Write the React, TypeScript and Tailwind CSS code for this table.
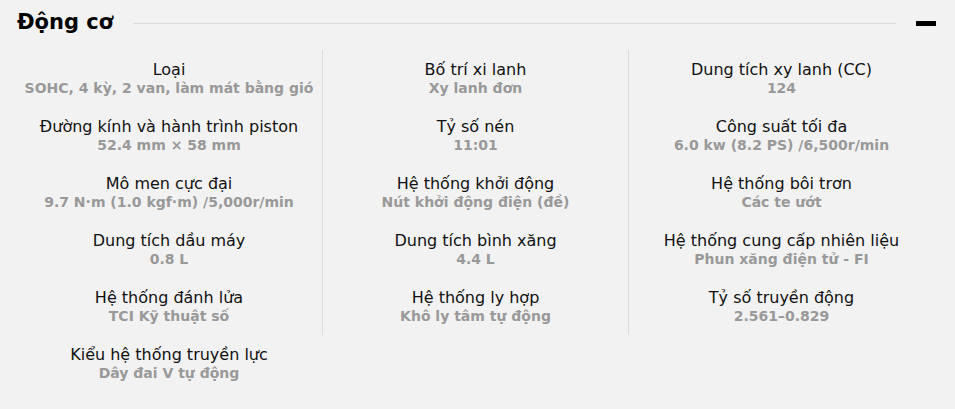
const columns: { label: string; value: string }[][] = [
  [
    { label: "Loại", value: "SOHC, 4 kỳ, 2 van, làm mát bằng gió" },
    { label: "Đường kính và hành trình piston", value: "52.4 mm × 58 mm" },
    { label: "Mô men cực đại", value: "9.7 N·m (1.0 kgf·m) /5,000r/min" },
    { label: "Dung tích dầu máy", value: "0.8 L" },
    { label: "Hệ thống đánh lửa", value: "TCI Kỹ thuật số" },
    { label: "Kiểu hệ thống truyền lực", value: "Dây đai V tự động" },
  ],
  [
    { label: "Bố trí xi lanh", value: "Xy lanh đơn" },
    { label: "Tỷ số nén", value: "11:01" },
    { label: "Hệ thống khởi động", value: "Nút khởi động điện (đề)" },
    { label: "Dung tích bình xăng", value: "4.4 L" },
    { label: "Hệ thống ly hợp", value: "Khô ly tâm tự động" },
  ],
  [
    { label: "Dung tích xy lanh (CC)", value: "124" },
    { label: "Công suất tối đa", value: "6.0 kw (8.2 PS) /6,500r/min" },
    { label: "Hệ thống bôi trơn", value: "Các te ướt" },
    { label: "Hệ thống cung cấp nhiên liệu", value: "Phun xăng điện tử - FI" },
    { label: "Tỷ số truyền động", value: "2.561–0.829" },
  ],
];

export default function App() {
  return (
    <div
      className="min-h-[409px] w-full bg-[#f2f2f2] pl-4 pr-[21px] pt-2"
      style={{ fontFamily: '"DejaVu Sans", sans-serif' }}
    >
      <div className="flex h-[30px] items-center">
        <h2 className="pl-px text-[21px] font-bold text-black">Động cơ</h2>
        <div className="ml-5 h-px flex-1 bg-[#dcdcdc]" />
        <div className="ml-5 mr-[-2px] h-[5px] w-5 bg-black" />
      </div>
      <div className="mt-[12px] grid grid-cols-3 items-start">
        {columns.map((col, ci) => (
          <div key={ci} className={ci > 0 ? "border-l border-[#dcdcdc]" : ""}>
            {col.map((item) => (
              <div key={item.label} className="pt-[11px] pb-[9px] text-center">
                <p className="text-[16px] leading-[18px] text-[#111]">{item.label}</p>
                <p className="text-[14px] leading-[19px] font-bold text-[#999]">{item.value}</p>
              </div>
            ))}
          </div>
        ))}
      </div>
    </div>
  );
}
